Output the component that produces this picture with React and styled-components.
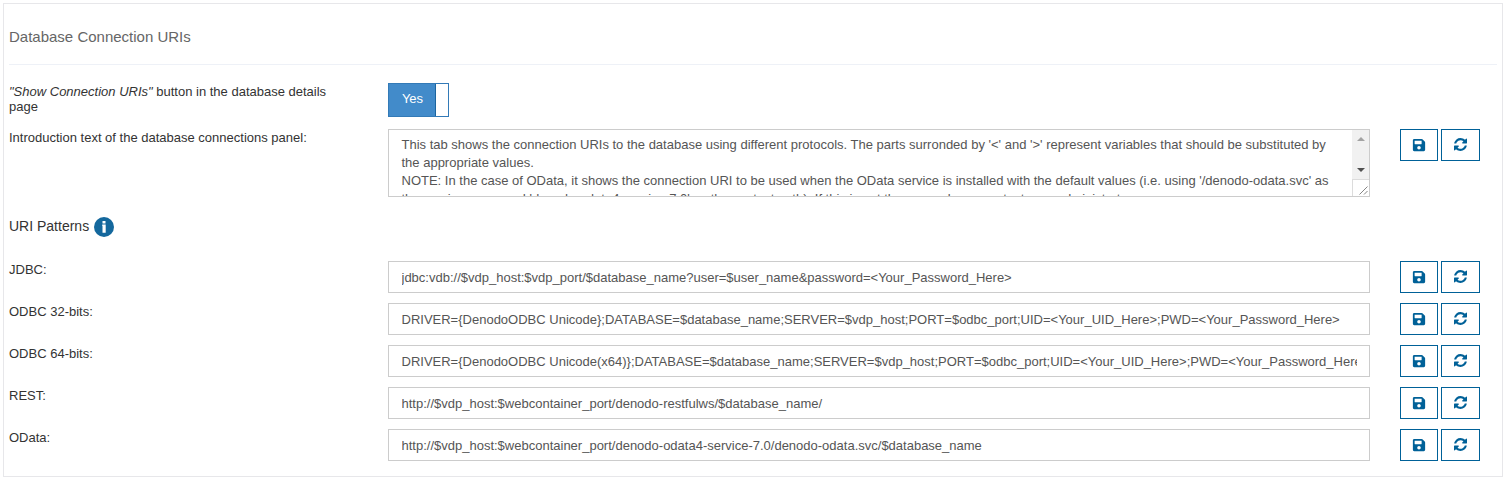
import React from 'react';
import styled, { createGlobalStyle } from 'styled-components';
import { FaSave } from 'react-icons/fa';

const GlobalStyle = createGlobalStyle`
  * { box-sizing: border-box; }
  body {
    margin: 0;
    background: #fff;
    font-family: "Liberation Sans", Arial, sans-serif;
    font-size: 13px;
    color: #333;
    overflow: hidden;
  }
`;

const Panel = styled.section`
  width: 1500px;
  height: 474px;
  margin: 3px;
  padding: 0 5px;
  border: 1px solid #e7e7ea;
`;

const Title = styled.h2`
  height: 61px;
  margin: 0 0 18px;
  padding: 23px 0 0;
  border-bottom: 1px solid #eef1f7;
  font-size: 15px;
  font-weight: 400;
  line-height: 20px;
  color: #666;
`;

const Row = styled.div`
  display: grid;
  grid-template-columns: 379px 982px 110px;
  height: ${(p) => p.$height || 42}px;
  align-items: start;
`;

const Label = styled.label`
  padding: 1px 40px 0 0;
  line-height: 15px;
`;

const Toggle = styled.button`
  display: flex;
  width: 61px;
  height: 34px;
  padding: 0;
  border: 1px solid #337ab7;
  background: #fff;
  font: inherit;
`;

const ToggleOn = styled.span`
  width: 47px;
  height: 32px;
  padding-left: 1px;
  border-right: 1px solid #1c659f;
  background: #428bca;
  color: #fff;
  line-height: 30px;
  text-align: center;
`;

const TextField = styled.input`
  width: 982px;
  height: 32px;
  padding: 1px 12px 0 12.5px;
  border: 1px solid #ccc;
  outline: none;
  font: inherit;
  color: #555;
  background: #fff;
`;

const TextArea = styled.div`
  display: flex;
  height: 68px;
  border: 1px solid #ccc;
  overflow: hidden;
  color: #555;
`;

const AreaText = styled.div`
  flex: 1;
  padding: 6px 12px 0 12.5px;
  line-height: 18px;
  white-space: pre;
`;

const ScrollColumn = styled.div`
  display: flex;
  flex-direction: column;
  width: 17px;
`;

const ScrollTrack = styled.div`
  display: flex;
  flex-direction: column;
  justify-content: space-between;
  align-items: center;
  height: 49px;
  padding: 7px 0;
  background: #f1f1f1;
`;

const Arrow = styled.i`
  border: 4px solid transparent;
  ${(p) => (p.$up
    ? 'border-top: 0; border-bottom-color: #a3a3a3;'
    : 'border-bottom: 0; border-top-color: #505050;')}
`;

const Corner = styled.div`
  display: flex;
  flex: 1;
  justify-content: flex-end;
  align-items: flex-end;
  padding: 0 1px 1px 0;
  border: solid #dcdcdc;
  border-width: 1px 0 0 1px;
`;

const Actions = styled.div`
  display: flex;
  gap: 3px;
  width: 80px;
  margin-left: 30px;
`;

const ActionButton = styled.button`
  display: flex;
  flex: none;
  align-items: center;
  justify-content: center;
  width: ${(p) => p.$width}px;
  height: 32px;
  padding: 0 0 1px;
  border: 1px solid #006198;
  background: #fff;
  color: #006198;
`;

const Subheading = styled.h3`
  display: flex;
  align-items: center;
  gap: 5px;
  height: 22px;
  margin: 0 0 23px;
  font-size: 14px;
  font-weight: 400;
`;

const SubheadingText = styled.span`
  padding-bottom: 2px;
`;

const RefreshIcon = () => (
  <svg width="13" height="13" viewBox="0 0 1536 1536" fill="currentColor">
    <path d="M1511 928q0 5-1 7-64 268-268 434.5t-478 166.5q-146 0-282.5-55t-243.5-157l-129 129q-19 19-45 19t-45-19-19-45v-448q0-26 19-45t45-19h448q26 0 45 19t19 45-19 45l-137 137q71 66 161 102t187 36q134 0 250-65t186-179q11-17 53-117 8-23 30-23h192q13 0 22.5 9.5t9.5 22.5zm25-800v448q0 26-19 45t-45 19h-448q-26 0-45-19t-19-45 19-45l138-138q-148-137-349-137-134 0-250 65t-186 179q-11 17-53 117-8 23-30 23h-199q-13 0-22.5-9.5t-9.5-22.5v-7q65-268 270-434.5t480-166.5q146 0 284 55.5t245 156.5l130-129q19-19 45-19t45 19 19 45z" />
  </svg>
);

const InfoIcon = () => (
  <svg width="20" height="20" viewBox="0 0 20 20">
    <circle cx="10" cy="10" r="10" fill="#14689d" />
    <path d="M8.5 4h3v2.4h-3zM8.2 7.5h3.5v8.3H8.5V9h-.3z" fill="#fff" />
  </svg>
);

const ResizeGrip = () => (
  <svg width="9" height="9" viewBox="0 0 9 9" stroke="#777" strokeWidth="0.9">
    <path d="M0.5 8.5L8.5 0.5M5 8.5L8.5 5" />
  </svg>
);

const RowActions = () => (
  <Actions>
    <ActionButton $width={38} aria-label="Save"><FaSave size={14} /></ActionButton>
    <ActionButton $width={39} aria-label="Restore"><RefreshIcon /></ActionButton>
  </Actions>
);

const INTRO = `This tab shows the connection URIs to the database using different protocols. The parts surronded by '<' and '>' represent variables that should be substituted by
the appropriate values.
NOTE: In the case of OData, it shows the connection URI to be used when the OData service is installed with the default values (i.e. using '/denodo-odata.svc' as
the service name and 'denodo-odata4-service-7.0' as the context path). If this is not the case, please contact your administrator.`;

const PATTERNS = [
  ['JDBC:', 'jdbc:vdb://$vdp_host:$vdp_port/$database_name?user=$user_name&password=<Your_Password_Here>'],
  ['ODBC 32-bits:', 'DRIVER={DenodoODBC Unicode};DATABASE=$database_name;SERVER=$vdp_host;PORT=$odbc_port;UID=<Your_UID_Here>;PWD=<Your_Password_Here>'],
  ['ODBC 64-bits:', 'DRIVER={DenodoODBC Unicode(x64)};DATABASE=$database_name;SERVER=$vdp_host;PORT=$odbc_port;UID=<Your_UID_Here>;PWD=<Your_Password_Here>'],
  ['REST:', 'http://$vdp_host:$webcontainer_port/denodo-restfulws/$database_name/'],
  ['OData:', 'http://$vdp_host:$webcontainer_port/denodo-odata4-service-7.0/denodo-odata.svc/$database_name'],
];

export default function App() {
  return (
    <>
      <GlobalStyle />
      <Panel>
        <Title>Database Connection URIs</Title>
        <Row $height={46}>
          <Label><em>"Show Connection URIs"</em> button in the database details page</Label>
          <Toggle><ToggleOn>Yes</ToggleOn></Toggle>
        </Row>
        <Row $height={87}>
          <Label>Introduction text of the database connections panel:</Label>
          <TextArea>
            <AreaText>{INTRO}</AreaText>
            <ScrollColumn>
              <ScrollTrack><Arrow $up /><Arrow /></ScrollTrack>
              <Corner><ResizeGrip /></Corner>
            </ScrollColumn>
          </TextArea>
          <RowActions />
        </Row>
        <Subheading><SubheadingText>URI Patterns</SubheadingText> <InfoIcon /></Subheading>
        {PATTERNS.map(([name, uri]) => (
          <Row key={name}>
            <Label>{name}</Label>
            <TextField defaultValue={uri} />
            <RowActions />
          </Row>
        ))}
      </Panel>
    </>
  );
}
